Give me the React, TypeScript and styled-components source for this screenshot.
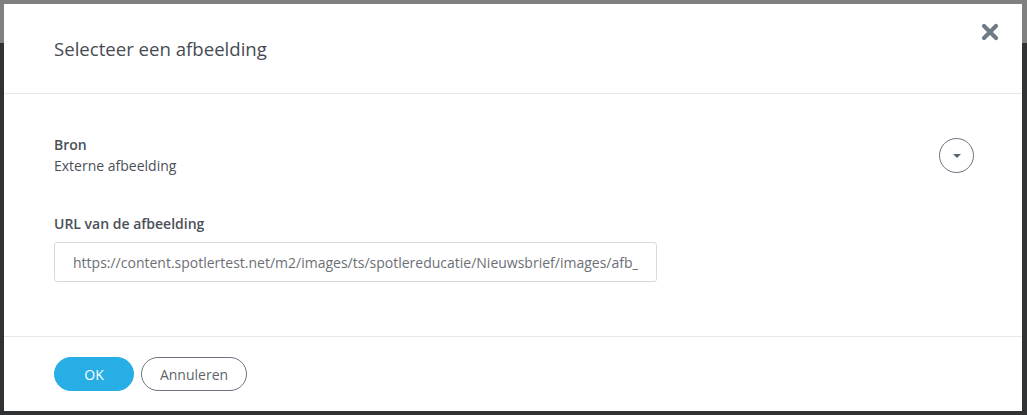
import React from "react";
import styled, { createGlobalStyle } from "styled-components";

const Global = createGlobalStyle`
  html, body { margin: 0; padding: 0; }
  body {
    width: 1027px;
    height: 415px;
    overflow: hidden;
    font-family: "Open Sans", "Noto Sans", sans-serif;
    background: linear-gradient(to bottom, #808080 0, #808080 43px, #313233 43px, #313233 100%);
  }
  * { box-sizing: border-box; }
`;

const Stage = styled.div`
  width: 1027px;
  height: 415px;
  padding: 4px 5px 4px 4px;
  display: flex;
`;

const Modal = styled.div`
  flex: 1;
  background: #ffffff;
  display: flex;
  flex-direction: column;
`;

const Header = styled.div`
  height: 90px;
  padding: 0 22px 0 50px;
  display: flex;
  align-items: center;
  justify-content: space-between;
  border-bottom: 1px solid #e8e8e8;
`;

const Title = styled.h2`
  margin: 0;
  font-size: 18.6px;
  font-weight: 400;
  color: #474c54;
`;

const CloseButton = styled.button`
  border: 0;
  background: none;
  padding: 0;
  width: 20px;
  height: 20px;
  margin-top: -33px;
  display: flex;
  align-items: center;
  justify-content: center;
  cursor: pointer;
`;

const Body = styled.div`
  flex: 1;
  padding: 40px 48px 0 50px;
  display: flex;
  flex-direction: column;
  border-bottom: 1px solid #e8e8e8;
`;

const SourceRow = styled.div`
  display: flex;
  align-items: center;
  justify-content: space-between;
`;

const Field = styled.div`
  display: flex;
  flex-direction: column;
`;

const Label = styled.div`
  font-size: 14px;
  font-weight: 600;
  color: #4b5058;
  line-height: 21px;
`;

const Value = styled.div`
  font-size: 14px;
  color: #4b5058;
  line-height: 21px;
`;

const RoundToggle = styled.button`
  width: 35px;
  height: 35px;
  border-radius: 50%;
  border: 1px solid #6b7280;
  background: #fff;
  display: flex;
  align-items: center;
  justify-content: center;
  padding: 0;
  margin-top: 1px;
`;

const UrlField = styled(Field)`
  margin-top: 37px;
  gap: 8px;
`;

const UrlInput = styled.input`
  width: 603px;
  height: 40px;
  border: 1px solid #d9d9d9;
  border-radius: 3px;
  padding: 0 18px;
  font-family: inherit;
  font-size: 14px;
  color: #6b6f75;
  outline: none;
`;

const Footer = styled.div`
  height: 74px;
  padding: 0 50px;
  display: flex;
  align-items: center;
  gap: 7px;
`;

const Pill = styled.button<{ $primary?: boolean }>`
  height: 34px;
  border-radius: 17px;
  font-family: inherit;
  font-size: 14px;
  cursor: pointer;
  padding: 0;
  width: ${(p) => (p.$primary ? "80px" : "106px")};
  background: ${(p) => (p.$primary ? "#27aee5" : "#ffffff")};
  color: ${(p) => (p.$primary ? "#ffffff" : "#5f646b")};
  border: 1px solid ${(p) => (p.$primary ? "#27aee5" : "#6b7280")};
`;

export default function App() {
  return (
    <>
      <Global />
      <Stage>
        <Modal>
          <Header>
            <Title>Selecteer een afbeelding</Title>
            <CloseButton aria-label="Sluiten">
              <svg width="18" height="18" viewBox="0 0 18 18">
                <path d="M3 3 L15 15 M15 3 L3 15" stroke="#6e7b87" strokeWidth="4.2" strokeLinecap="round" />
              </svg>
            </CloseButton>
          </Header>
          <Body>
            <SourceRow>
              <Field>
                <Label>Bron</Label>
                <Value>Externe afbeelding</Value>
              </Field>
              <RoundToggle aria-label="Kies bron">
                <svg width="10" height="6" viewBox="0 0 10 6">
                  <path d="M1 1 L9 1 L5 5 Z" fill="#5a6470" />
                </svg>
              </RoundToggle>
            </SourceRow>
            <UrlField>
              <Label>URL van de afbeelding</Label>
              <UrlInput
                readOnly
                value="https://content.spotlertest.net/m2/images/ts/spotlereducatie/Nieuwsbrief/images/afb_"
              />
            </UrlField>
          </Body>
          <Footer>
            <Pill $primary>OK</Pill>
            <Pill>Annuleren</Pill>
          </Footer>
        </Modal>
      </Stage>
    </>
  );
}
